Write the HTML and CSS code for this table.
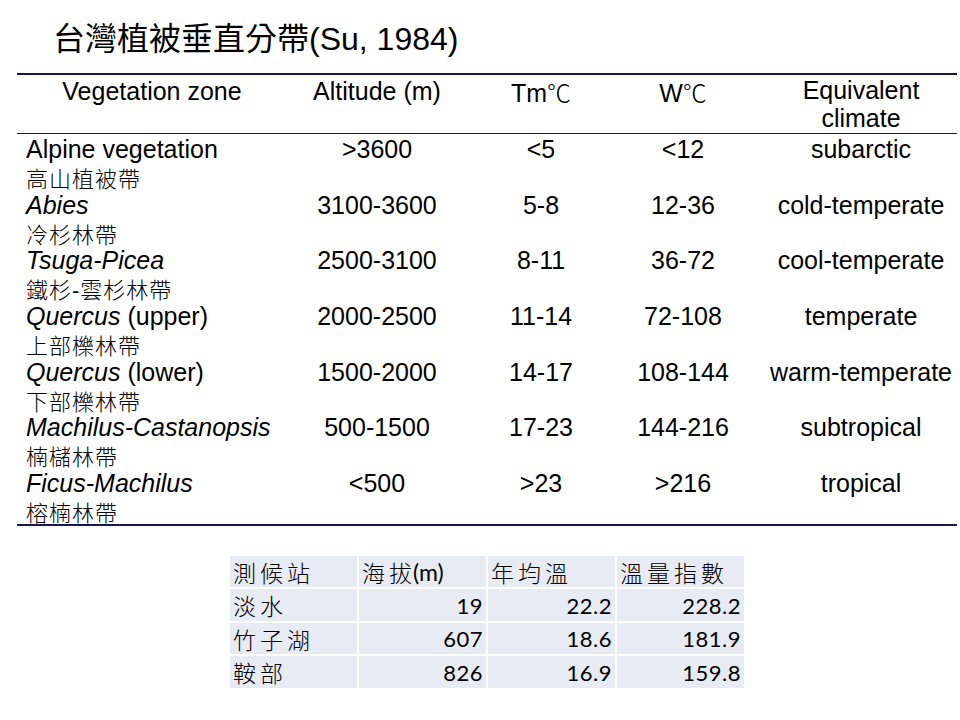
FILE: index.html
```html
<!DOCTYPE html>
<html lang="zh-Hant">
<head>
<meta charset="utf-8">
<title>台灣植被垂直分帶</title>
<link rel="stylesheet" href="styles.css">
</head>
<body>
<div class="slide">
  <h1 class="title">台灣植被垂直分帶(Su, 1984)</h1>

  <div class="zones">
    <div class="zrow zhead">
      <div class="c1">Vegetation zone</div>
      <div>Altitude (m)</div>
      <div>Tm<span class="deg">℃</span></div>
      <div>W<span class="deg">℃</span></div>
      <div class="two">Equivalent<br>climate</div>
    </div>
    <div class="zrow zbody">
      <div class="c1"><div class="en">Alpine vegetation</div><div class="zh">高山植被帶</div></div>
      <div>&gt;3600</div><div>&lt;5</div><div>&lt;12</div><div>subarctic</div>
    </div>
    <div class="zrow zbody">
      <div class="c1"><div class="en"><i>Abies</i></div><div class="zh">冷杉林帶</div></div>
      <div>3100-3600</div><div>5-8</div><div>12-36</div><div>cold-temperate</div>
    </div>
    <div class="zrow zbody">
      <div class="c1"><div class="en"><i>Tsuga-Picea</i></div><div class="zh">鐵杉-雲杉林帶</div></div>
      <div>2500-3100</div><div>8-11</div><div>36-72</div><div>cool-temperate</div>
    </div>
    <div class="zrow zbody">
      <div class="c1"><div class="en"><i>Quercus</i> (upper)</div><div class="zh">上部櫟林帶</div></div>
      <div>2000-2500</div><div>11-14</div><div>72-108</div><div>temperate</div>
    </div>
    <div class="zrow zbody">
      <div class="c1"><div class="en"><i>Quercus</i> (lower)</div><div class="zh">下部櫟林帶</div></div>
      <div>1500-2000</div><div>14-17</div><div>108-144</div><div>warm-temperate</div>
    </div>
    <div class="zrow zbody">
      <div class="c1"><div class="en"><i>Machilus-Castanopsis</i></div><div class="zh">楠櫧林帶</div></div>
      <div>500-1500</div><div>17-23</div><div>144-216</div><div>subtropical</div>
    </div>
    <div class="zrow zbody">
      <div class="c1"><div class="en"><i>Ficus-Machilus</i></div><div class="zh">榕楠林帶</div></div>
      <div>&lt;500</div><div>&gt;23</div><div>&gt;216</div><div>tropical</div>
    </div>
  </div>

  <div class="stations">
    <div class="cell txt">測候站</div>
    <div class="cell txt">海<span class="tight">拔</span><span class="lat">(m)</span></div>
    <div class="cell txt">年均溫</div>
    <div class="cell txt">溫量指數</div>

    <div class="cell txt">淡水</div>
    <div class="cell num">19</div>
    <div class="cell num">22.2</div>
    <div class="cell num">228.2</div>

    <div class="cell txt">竹子湖</div>
    <div class="cell num">607</div>
    <div class="cell num">18.6</div>
    <div class="cell num">181.9</div>

    <div class="cell txt">鞍部</div>
    <div class="cell num">826</div>
    <div class="cell num">16.9</div>
    <div class="cell num">159.8</div>
  </div>
</div>
</body>
</html>
```
FILE: styles.css
```css
html, body {
  margin: 0;
  padding: 0;
  background: #ffffff;
}

.slide {
  width: 960px;
  height: 720px;
  box-sizing: border-box;
  padding-top: 19px;
  font-family: "Liberation Sans", "Noto Sans CJK TC", sans-serif;
  color: #000000;
}

.title {
  margin: 0 0 0 53px;
  height: 40px;
  font-size: 32px;
  font-weight: normal;
  line-height: 40px;
  white-space: nowrap;
}

/* vegetation zone table */
.zones {
  margin: 14px 0 0 17px;
  width: 940px;
  border-top: 2px solid #16165c;
  border-bottom: 2px solid #16165c;
}

.zrow {
  display: grid;
  grid-template-columns: 256px 208px 120px 164px 192px;
  font-size: 25px;
}

.zrow > div {
  text-align: center;
  white-space: nowrap;
}

.zhead {
  height: 59px;
  box-sizing: border-box;
  padding-top: 4px;
  line-height: 25px;
  border-bottom: 1px solid #16165c;
}

.zhead .c1 {
  padding-left: 14px;
}

.zhead .two {
  margin-top: -3px;
  line-height: 28px;
}

.deg {
  font-family: "Noto Sans CJK TC", sans-serif;
  font-weight: 300;
  font-size: 24px;
}

.zbody {
  height: 55.7px;
}

.zbody > div {
  padding-top: 2px;
  line-height: 27px;
}

.zbody > .c1 {
  text-align: left;
  padding-left: 9px;
}

.zbody .zh {
  font-family: "Liberation Sans", "Noto Sans CJK TC", sans-serif;
  font-weight: 300;
  font-size: 22px;
  letter-spacing: 1px;
  line-height: 19px;
  padding-top: 7px;
}

/* stations table */
.stations {
  margin: 30px 0 0 230px;
  width: 514px;
  display: grid;
  grid-template-columns: repeat(4, 1fr);
  grid-auto-rows: 31.5px;
  gap: 2px;
}

.cell {
  display: flex;
  align-items: center;
  padding: 0 3px;
  background: #e8eaf4;
  font-family: "Lato", "Noto Sans CJK TC", sans-serif;
  font-size: 22px;
  white-space: nowrap;
}

.txt {
  font-family: "Noto Sans CJK TC", sans-serif;
  font-weight: 300;
  font-size: 23px;
  letter-spacing: 4px;
}

.txt .tight {
  letter-spacing: 1px;
}

.txt .lat {
  font-family: "Lato", sans-serif;
  font-weight: 400;
  font-size: 23px;
  letter-spacing: 0;
}

.num {
  justify-content: flex-end;
  letter-spacing: 0.5px;
}
```
